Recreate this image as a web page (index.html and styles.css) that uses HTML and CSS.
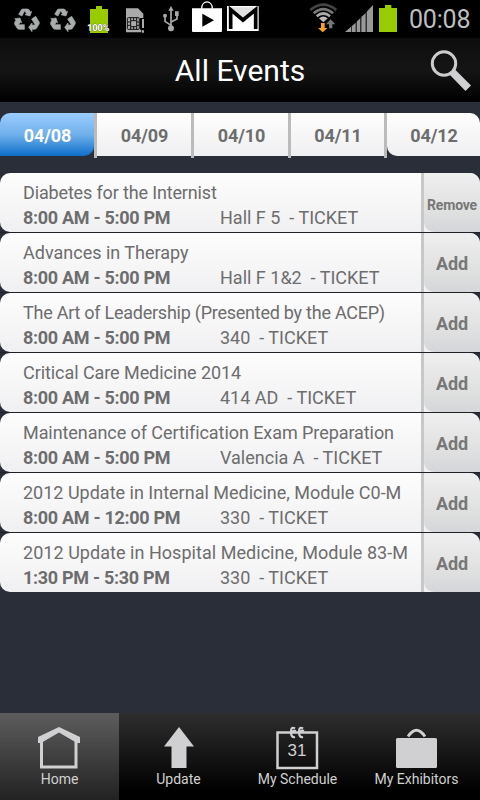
FILE: index.html
```html
<!DOCTYPE html>
<html lang="en">
<head>
    <meta charset="UTF-8">
    <meta name="viewport" content="width=device-width, initial-scale=1.0">
    <title>All Events</title>
    <link rel="stylesheet" href="styles.css">
</head>
<body>
    <div class="status-bar">
        <svg width="192" height="38" viewBox="0 0 576 114">
            <defs>
                <g id="recycle" fill="#a9acac" stroke="#a9acac" stroke-width="2">
                    <path d="M56 43 L65 28 Q67 27 70 27 H83 Q86 27 88 30 L91 36 L95 34 L90 48 L75 44 L80 42 L74 32 L66 48 Z"/>
                    <path d="M44 56 L60 54 L65 69 L61 66 L56 74 H73 V88 H58 Q53 88 51 84 L44 73 Q43 70 44 67 L48 60 Z"/>
                    <path d="M95 57 L107 49 L117 65 Q119 69 117 73 L110 84 Q108 88 104 88 H96 V95 L86 82 L96 69 V75 H106 Z"/>
                </g>
            </defs>
            <use href="#recycle"/>
            <use href="#recycle" x="108"/>
            <path fill="#9c0" d="M288 18h18v9h18v72h-54V27h18z"/>
            <text class="battery-text" x="262" y="93" textLength="66" lengthAdjust="spacingAndGlyphs">100%</text>
            <path fill="#aaa" d="M378 25h36l16 16v13h-48v35h42v8h-46z"/>
            <rect x="380" y="51" width="40" height="40" fill="#aaa"/>
            <g fill="none" stroke="#111" stroke-width="3">
                <rect x="382" y="53" width="36" height="35" rx="3"/>
                <path d="M392 62h18v18h-18zM392 53v9M401 53v9M410 53v9M392 80v9M401 80v9M410 80v9M383 66h9M383 76h9M410 66h9M410 76h9"/>
            </g>
            <path fill="#aaa" d="M426 57h6v27h-6zM426 91h6v7h-6z"/>
            <g fill="none" stroke="#aaa" stroke-width="5">
                <path d="M513 84V29M513 76L495 64V50M513 66L531 57V46"/>
            </g>
            <path fill="#aaa" d="M513 18l8 14h-16zM525 34h11v14h-11z"/>
            <circle cx="513" cy="85" r="9" fill="#aaa"/>
            <circle cx="495" cy="47" r="6" fill="#aaa"/>
        </svg>
        <svg width="76" height="38" viewBox="0 0 228 114">
            <path fill="none" stroke="#fff" stroke-width="4" d="M29 26C29 -1 61 -1 61 26"/>
            <path fill="#fff" d="M0 25h90v68q0 3-3 3H3q-3 0-3-3z"/>
            <path d="M31 41v39l35-19z"/>
            <path fill="#fff" d="M105 18h95v75h-95z"/>
            <path d="M106 22h93v3l-46 39-47-39z" fill="#000" opacity=".12"/>
            <path fill="none" stroke="#000" stroke-width="11" d="M116 87V29l37 31 38-31v58"/>
        </svg>
        <svg class="signal-icons" width="92" height="38" viewBox="0 0 276 114">
            <g fill="none" stroke-width="8">
                <path stroke="#444" d="M7 30Q46-2 85 30"/>
                <path stroke="#777" d="M17 40Q46 15 75 40"/>
                <path stroke="#aaa" d="M26 49Q46 32 66 49"/>
            </g>
            <path fill="#bbb" d="M33 55Q46 44 59 55L46 67z"/>
            <path fill="#ffa126" d="M39 69h11v15h8L44 97 30 84h9z"/>
            <path fill="#777" d="M68 58l14 15h-9v12H63V73H54z"/>
            <path fill="#999" d="M111 96l18-16v16zM131 96V79l12-11v28zM146 96V65l11-11v42zM160 96V51l13-12v57zM176 96V35l19-20v81z"/>
            <path fill="#9c0" d="M230 15h19v9h17v72h-54V24h18z" transform="translate(1)"/>
        </svg>
        <span class="clock">00:08</span>
    </div>

    <header class="header">
        <h1>All Events</h1>
        <svg class="search-icon" width="44" height="44" viewBox="0 0 44 44">
            <circle cx="16" cy="15.5" r="11.7" fill="none" stroke="#ccc" stroke-width="3"/>
            <path fill="#d0d0d2" d="M21.5 26.5l5-5.5L43 37.5 37.5 43z"/>
        </svg>
    </header>

    <nav class="dates">
        <a class="date active">04/08</a>
        <a class="date">04/09</a>
        <a class="date">04/10</a>
        <a class="date">04/11</a>
        <a class="date last">04/12</a>
    </nav>

    <main class="events">
        <div class="event">
            <div class="event-info">
                <div class="event-title tight">Diabetes for the Internist</div>
                <div class="event-meta"><b>8:00 AM - 5:00 PM</b><span>Hall F 5&nbsp; - TICKET</span></div>
            </div>
            <div class="event-action"><button class="btn btn-remove">Remove</button></div>
        </div>
        <div class="event">
            <div class="event-info">
                <div class="event-title">Advances in Therapy</div>
                <div class="event-meta"><b>8:00 AM - 5:00 PM</b><span>Hall F 1&amp;2&nbsp; - TICKET</span></div>
            </div>
            <div class="event-action"><button class="btn">Add</button></div>
        </div>
        <div class="event">
            <div class="event-info">
                <div class="event-title tighter">The Art of Leadership (Presented by the ACEP)</div>
                <div class="event-meta"><b>8:00 AM - 5:00 PM</b><span>340&nbsp; - TICKET</span></div>
            </div>
            <div class="event-action"><button class="btn">Add</button></div>
        </div>
        <div class="event">
            <div class="event-info">
                <div class="event-title snug">Critical Care Medicine 2014</div>
                <div class="event-meta"><b>8:00 AM - 5:00 PM</b><span>414 AD&nbsp; - TICKET</span></div>
            </div>
            <div class="event-action"><button class="btn">Add</button></div>
        </div>
        <div class="event">
            <div class="event-info">
                <div class="event-title snug">Maintenance of Certification Exam Preparation</div>
                <div class="event-meta"><b>8:00 AM - 5:00 PM</b><span>Valencia A&nbsp; - TICKET</span></div>
            </div>
            <div class="event-action"><button class="btn">Add</button></div>
        </div>
        <div class="event">
            <div class="event-info">
                <div class="event-title">2012 Update in Internal Medicine, Module C0-M</div>
                <div class="event-meta"><b>8:00 AM - 12:00 PM</b><span>330&nbsp; - TICKET</span></div>
            </div>
            <div class="event-action"><button class="btn">Add</button></div>
        </div>
        <div class="event">
            <div class="event-info">
                <div class="event-title loose">2012 Update in Hospital Medicine, Module 83-M</div>
                <div class="event-meta"><b>1:30 PM - 5:30 PM</b><span>330&nbsp; - TICKET</span></div>
            </div>
            <div class="event-action"><button class="btn">Add</button></div>
        </div>
    </main>

    <nav class="tab-bar">
        <a class="tab active">
            <svg width="44" height="44" viewBox="1 0 44 44">
                <path fill="none" stroke="#d0d0d2" stroke-width="3" d="M4.5 14v27h34.500V14"/>
                <path fill="#d0d0d2" d="M22 1L43 11v6h-3L22 6.500 4 17H1v-6z"/>
            </svg>
            <span>Home</span>
        </a>
        <a class="tab">
            <svg width="44" height="44" viewBox="0 0 44 44">
                <path fill="#d0d0d2" d="M22 1l15 19.500h-7.500V42H14.500V20.500H7z"/>
            </svg>
            <span>Update</span>
        </a>
        <a class="tab">
            <svg width="44" height="44" viewBox="1 0 44 44">
                <rect x="2.500" y="6.500" width="39.500" height="35.500" fill="none" stroke="#d0d0d2" stroke-width="2.500"/>
                <path fill="none" stroke="#d0d0d2" stroke-width="2.200" d="M20 2.500Q16 0 16 6T20 11M21 5Q18 4 17 7M28 2.500Q24 0 24 6T28 11M29 5Q26 4 25 7"/>
                <text class="calendar-day" x="12.500" y="30" textLength="19">31</text>
            </svg>
            <span>My Schedule</span>
        </a>
        <a class="tab">
            <svg width="44" height="44" viewBox="1 0 44 44">
                <rect x="2" y="12" width="41" height="30" rx="1.500" fill="#d0d0d2"/>
                <path fill="none" stroke="#d0d0d2" stroke-width="2.800" d="M14 10.500Q22.500-2 31 10.500"/>
            </svg>
            <span>My Exhibitors</span>
        </a>
    </nav>
</body>
</html>
```

FILE: styles.css
```css
* {
    margin: 0;
    padding: 0;
    box-sizing: border-box;
}

body {
    width: 480px;
    height: 800px;
    display: flex;
    flex-direction: column;
    overflow: hidden;
    background: #2a2e39;
    color: #6d6d6d;
    font-family: Roboto, sans-serif;
}

svg {
    display: block;
    flex-shrink: 0;
}

.status-bar {
    height: 38px;
    display: flex;
    background: #000;
}

.battery-text {
    fill: #fff;
    stroke: #555;
    stroke-width: 2px;
    paint-order: stroke;
    font-size: 28px;
    font-weight: 700;
}

.signal-icons {
    margin-left: 40px;
}

.clock {
    margin-left: 9px;
    color: #bebebe;
    font-size: 25px;
    line-height: 40px;
    letter-spacing: -0.2px;
    white-space: nowrap;
}

.header {
    height: 64px;
    display: flex;
    align-items: center;
    background: linear-gradient(#0d0d0d, #151515 50%, #000);
}

.header h1 {
    flex: 1;
    padding-left: 52px;
    color: #fff;
    font-size: 30px;
    font-weight: 400;
    text-align: center;
}

.search-icon {
    margin-right: 8px;
}

.dates {
    height: 45px;
    margin-top: 11px;
    display: grid;
    grid-template-columns: 97px 97px 97px 96px 93px;
}

.date {
    height: 43px;
    display: flex;
    align-items: center;
    justify-content: center;
    padding: 2px 0 0 1px;
    background: linear-gradient(#fefefe, #efeff1);
    font-size: 18px;
    font-weight: 700;
    letter-spacing: -0.1px;
}

.date:not(.last) {
    height: 45px;
    padding-bottom: 2px;
    border-right: 3px solid #bbb;
    background: linear-gradient(#fefefe, #efeff1) 0 0 / 100% 43px no-repeat;
    background-clip: padding-box;
}

.date.active {
    position: relative;
    z-index: 0;
    background: none;
    color: #fff;
}

.date.active::before {
    content: "";
    position: absolute;
    z-index: -1;
    inset: 0 0 2px;
    border-radius: 10px 0 10px 0;
    background: linear-gradient(#9bcdff, #70b0eb 50%, #0d6fca);
}

.date.last {
    border-radius: 0 10px 0 10px;
}

.events {
    margin-top: 15px;
}

.event {
    height: 60px;
    display: flex;
    border-bottom: 1px solid #1f2126;
}

.event:last-child {
    border-bottom: none;
    height: 59px;
}

.event-info {
    width: 424px;
    padding: 9px 0 0 23px;
    border-right: 3px solid #c8c8c8;
    border-radius: 10px 0 0 10px;
    background: linear-gradient(#fdfdfd, #f0f0f2);
    font-size: 18px;
    white-space: nowrap;
}

.event-title {
    height: 25px;
    line-height: 22px;
}

.event-title.loose {
    letter-spacing: 0.04px;
}

.event-title.snug {
    letter-spacing: -0.07px;
}

.event-title.tight {
    letter-spacing: -0.15px;
}

.event-title.tighter {
    letter-spacing: -0.25px;
}

.event-meta {
    display: flex;
    line-height: 22px;
}

.event-meta b {
    width: 197px;
    letter-spacing: -0.3px;
}

.event-action {
    width: 56px;
    border-radius: 0 10px 0 0;
    background: linear-gradient(#fdfdfd, #f0f0f2);
}

.btn {
    width: 100%;
    height: 100%;
    padding-top: 2px;
    border: none;
    border-radius: 0 10px 0 10px;
    background: linear-gradient(#efefef, #e0e1e0 60%, #d5d6d9);
    color: #777;
    font: 700 18px Roboto, sans-serif;
    letter-spacing: -0.2px;
}

.btn-remove {
    padding-top: 5px;
    font-size: 14px;
}

.tab-bar {
    height: 87px;
    margin-top: auto;
    display: grid;
    grid-template-columns: 119px 119px 119px 119px;
    padding-right: 4px;
    background: linear-gradient(#2e2e2e, #000 90%);
}

.tab {
    display: flex;
    flex-direction: column;
    align-items: center;
    padding-top: 13px;
    color: #d0d0d0;
    font-size: 14px;
    white-space: nowrap;
}

.tab.active {
    background: linear-gradient(#5d5d5d, #222);
}

.tab span {
    line-height: 18px;
}

.calendar-day {
    fill: #d0d0d2;
    font-family: "Liberation Sans", sans-serif;
    font-size: 17px;
}
```
